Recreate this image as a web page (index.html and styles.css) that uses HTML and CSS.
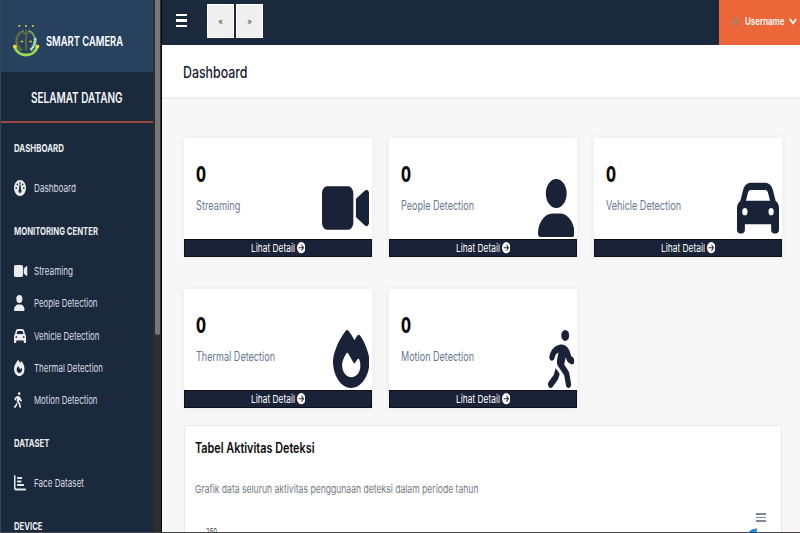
FILE: index.html
```html
<!DOCTYPE html>
<html lang="id">
<head>
<meta charset="utf-8">
<title>Smart Camera</title>
<link rel="stylesheet" href="styles.css">
</head>
<body>
<svg class="sprite" aria-hidden="true">
  <symbol id="video" viewBox="0 0 576 512" preserveAspectRatio="none"><path d="M0 128C0 92.7 28.7 64 64 64H320c35.3 0 64 28.7 64 64V384c0 35.3-28.7 64-64 64H64c-35.3 0-64-28.7-64-64V128zM559.1 99.8c10.4 5.6 16.9 16.4 16.9 28.2V384c0 11.8-6.5 22.6-16.9 28.2s-23 5-32.9-1.6l-96-64L416 337.1V320 192 174.9l14.2-9.5 96-64c9.8-6.5 22.4-7.2 32.9-1.6z"/></symbol>
  <symbol id="user" viewBox="0 0 448 512" preserveAspectRatio="none"><path d="M224 256A128 128 0 1 0 224 0a128 128 0 1 0 0 256zm-45.7 48C79.8 304 0 383.8 0 482.3C0 498.7 13.3 512 29.7 512H418.3c16.4 0 29.7-13.3 29.7-29.7C448 383.8 368.2 304 269.7 304H178.3z"/></symbol>
  <symbol id="car" viewBox="0 0 512 512" preserveAspectRatio="none"><path d="M135.2 117.4L109.1 192H402.9l-26.1-74.6C372.3 104.6 360.2 96 346.6 96H165.4c-13.6 0-25.7 8.6-30.2 21.4zM39.6 196.8L74.8 96.3C88.3 57.8 124.6 32 165.4 32H346.6c40.8 0 77.1 25.8 90.6 64.3l35.2 100.5c23.2 9.6 39.6 32.5 39.6 59.2V400v48c0 17.7-14.3 32-32 32H448c-17.7 0-32-14.3-32-32V400H96v48c0 17.7-14.3 32-32 32H32c-17.7 0-32-14.3-32-32V400 256c0-26.7 16.4-49.6 39.6-59.2zM128 288a32 32 0 1 0 -64 0 32 32 0 1 0 64 0zm288 32a32 32 0 1 0 0-64 32 32 0 1 0 0 64z"/></symbol>
  <symbol id="fire" viewBox="0 0 448 512" preserveAspectRatio="none"><path d="M159.3 5.4c7.8-7.3 19.9-7.2 27.7 .1c27.6 25.9 53.5 53.8 77.7 84c11-14.4 23.5-30.1 37-42.9c7.9-7.4 20.1-7.4 28 .1c34.6 33 63.9 76.6 84.5 118c20.3 40.8 33.8 82.5 33.8 111.9C448 404.2 348.2 512 224 512C98.4 512 0 404.1 0 276.5c0-38.4 17.8-85.3 45.4-131.7C73.3 97.7 112.7 48.6 159.3 5.4zM225.7 416c25.3 0 47.7-7 68.8-21c42.1-29.4 53.4-88.2 28.1-134.4c-4.5-9-16-9.6-22.5-2l-25.2 29.3c-6.6 7.6-18.5 7.4-24.7-.5c-16.5-21-46-58.5-62.8-79.8c-6.3-8-18.3-8.1-24.7-.1c-33.8 42.5-50.8 69.3-50.8 99.4C112 375.4 162.6 416 225.7 416z"/></symbol>
  <symbol id="walk" viewBox="0 0 320 512" preserveAspectRatio="none"><path d="M160 48a48 48 0 1 1 96 0 48 48 0 1 1 -96 0zM126.5 199.3c-1 .4-1.9 .8-2.9 1.2l-8 3.5c-16.4 7.3-29 21.2-34.7 38.2l-2.6 7.8c-5.6 16.8-23.7 25.8-40.5 20.2s-25.8-23.7-20.2-40.5l2.6-7.8c11.4-34.1 36.6-61.9 69.4-76.5l8-3.5c20.8-9.2 43.3-14 66.1-14c44.6 0 84.8 26.8 101.9 67.9L281 232.7l21.4 10.7c15.8 7.9 22.2 27.1 14.3 42.9s-27.1 22.2-42.9 14.3L247 287.3c-10.3-5.2-18.4-13.8-22.8-24.5l-9.6-23-19.3 65.5 49.5 54c5.4 5.9 9.2 13 11.2 20.8l23 92.1c4.3 17.1-6.1 34.5-23.3 38.8s-34.5-6.1-38.8-23.3l-22-88.1-70.7-77.1c-14.8-16.1-20.3-38.6-14.7-59.7l16.9-63.5zM68.7 398l25-62.4c2.1 3 4.5 5.8 7 8.6l40.7 44.4-14.5 36.2c-2.4 6-6 11.5-10.6 16.1L54.6 502.6c-12.5 12.5-32.8 12.5-45.3 0s-12.5-32.8 0-45.3L68.7 398z"/></symbol>
  <symbol id="go" viewBox="0 0 512 512" preserveAspectRatio="none"><path d="M0 256a256 256 0 1 0 512 0A256 256 0 1 0 0 256zM297 385c-9.4 9.4-24.6 9.4-33.9 0s-9.4-24.6 0-33.9l71-71L120 280c-13.3 0-24-10.7-24-24s10.7-24 24-24l214.1 0-71-71c-9.4-9.4-9.4-24.6 0-33.9s24.6-9.4 33.9 0L409 239c9.4 9.4 9.4 24.6 0 33.9L297 385z"/></symbol>
  <symbol id="gauge" viewBox="0 0 512 512" preserveAspectRatio="none"><path fill-rule="evenodd" d="M0 256a256 256 0 1 1 512 0A256 256 0 1 1 0 256zM288 96a32 32 0 1 0-64 0 32 32 0 1 0 64 0zM256 416c35.300 0 64-28.700 64-64 0-17.400-6.900-33.100-18.100-44.600L280 140h-48l-21.900 167.400C198.900 318.900 192 334.600 192 352c0 35.300 28.700 64 64 64zM176 144a32 32 0 1 0-64 0 32 32 0 1 0 64 0zM96 288a32 32 0 1 0 0-64 32 32 0 1 0 0 64zm352-32a32 32 0 1 0-64 0 32 32 0 1 0 64 0zM368 176a32 32 0 1 0 0-64 32 32 0 1 0 0 64z"/></symbol>
  <symbol id="chart" viewBox="0 0 512 512" preserveAspectRatio="none"><path d="M32 0c17.700 0 32 14.300 32 32V416c0 8.800 7.200 16 16 16H480c17.700 0 32 14.300 32 32s-14.300 32-32 32H80c-44.200 0-80-35.800-80-80V32C0 14.300 14.300 0 32 0zM160 64H320a32 32 0 0 1 0 64H160a32 32 0 0 1 0-64zM160 176H288a32 32 0 0 1 0 64H160a32 32 0 0 1 0-64zM160 288H400a32 32 0 0 1 0 64H160a32 32 0 0 1 0-64z"/></symbol>
</svg>

<div class="app">
  <aside class="sidebar">
    <div class="brand">
      <svg class="logo" viewBox="0 0 28 36">
        <g fill="#f2d92d"><circle cx="6.500" cy="2.500" r="1"/><circle cx="13.500" cy="2.500" r="1"/><circle cx="20.500" cy="2.500" r="1"/></g>
        <path d="M11 7.500C1.500 11 1.500 23 9.500 28" fill="none" stroke="#77803f" stroke-width="2.600" stroke-dasharray="1.600 .7"/>
        <path d="M16 7.500c5 1.500 7.500 7 7 12.500" fill="none" stroke="#86b96e" stroke-width="2" stroke-dasharray="1.600 .4"/>
        <path d="M23 15c0 6-2 10-5 12.500" fill="none" stroke="#b5e8bd" stroke-width="2.800" stroke-dasharray="2.400 .4"/>
        <path d="M13.500 6v22M10.500 10h6" stroke="#77773c" stroke-width="1.300"/>
        <path d="M8 18.500h2.500M17 18.500h2.500" stroke="#e6cf32" stroke-width="1.500"/>
        <path d="M1.500 23.500C5 35.500 22 35.500 25.500 23.500" fill="none" stroke="#9bdc4c" stroke-width="3"/>
        <path d="M.3 24l3.500-1M23.500 23l3.500 1" stroke="#f5df3b" stroke-width="3"/>
      </svg>
      <span class="brand-name fit" data-width="77">SMART CAMERA</span>
    </div>
    <div class="welcome"><span class="fit" data-width="91.500">SELAMAT DATANG</span></div>
    <nav class="nav">
      <h2 class="section"><span class="fit" data-width="50">DASHBOARD</span></h2>
      <a class="item"><span class="ico"><svg class="w512"><use href="#gauge"/></svg></span><span class="fit" data-width="42">Dashboard</span></a>
      <h2 class="section"><span class="fit" data-width="84">MONITORING CENTER</span></h2>
      <a class="item"><span class="ico"><svg class="w576"><use href="#video"/></svg></span><span class="fit" data-width="39">Streaming</span></a>
      <a class="item"><span class="ico"><svg class="w448"><use href="#user"/></svg></span><span class="fit" data-width="63.500">People Detection</span></a>
      <a class="item"><span class="ico"><svg class="w512"><use href="#car"/></svg></span><span class="fit" data-width="65.500">Vehicle Detection</span></a>
      <a class="item"><span class="ico"><svg class="w448"><use href="#fire"/></svg></span><span class="fit" data-width="69">Thermal Detection</span></a>
      <a class="item"><span class="ico"><svg class="w320"><use href="#walk"/></svg></span><span class="fit" data-width="63.500">Motion Detection</span></a>
      <h2 class="section"><span class="fit" data-width="35.500">DATASET</span></h2>
      <a class="item"><span class="ico"><svg class="w512"><use href="#chart"/></svg></span><span class="fit" data-width="50">Face Dataset</span></a>
      <h2 class="section"><span class="fit" data-width="28.500">DEVICE</span></h2>
    </nav>
  </aside>
  <div class="track"><div class="thumb"></div></div>

  <div class="main">
    <header class="topbar">
      <div class="burger"><i></i><i></i><i></i></div>
      <div class="pager"><button>«</button><button>»</button></div>
      <div class="account">
        <span class="hash">#</span>
        <span class="user-name fit" data-width="39.500">Username</span>
        <svg class="chevron" viewBox="0 0 8 7"><path d="M.8 1L4 5.300 7.200 1" fill="none" stroke="#fff" stroke-width="1.700"/></svg>
      </div>
    </header>
    <div class="page-head"><h1 class="fit" data-width="64.500">Dashboard</h1></div>
    <main class="content">
      <div class="cards">
        <section class="card">
          <div class="card-body"><div><div class="count"><span class="fit" data-width="10">0</span></div><div class="label"><span class="fit" data-width="44.500">Streaming</span></div></div><svg class="big w576"><use href="#video"/></svg></div>
          <a class="detail"><span class="fit" data-width="44">Lihat Detail</span><svg><use href="#go"/></svg></a>
        </section>
        <section class="card">
          <div class="card-body"><div><div class="count"><span class="fit" data-width="10">0</span></div><div class="label"><span class="fit" data-width="73">People Detection</span></div></div><svg class="big w448"><use href="#user"/></svg></div>
          <a class="detail"><span class="fit" data-width="44">Lihat Detail</span><svg><use href="#go"/></svg></a>
        </section>
        <section class="card">
          <div class="card-body"><div><div class="count"><span class="fit" data-width="10">0</span></div><div class="label"><span class="fit" data-width="75">Vehicle Detection</span></div></div><svg class="big w512"><use href="#car"/></svg></div>
          <a class="detail"><span class="fit" data-width="44">Lihat Detail</span><svg><use href="#go"/></svg></a>
        </section>
        <section class="card">
          <div class="card-body"><div><div class="count"><span class="fit" data-width="10">0</span></div><div class="label"><span class="fit" data-width="79">Thermal Detection</span></div></div><svg class="big w448"><use href="#fire"/></svg></div>
          <a class="detail"><span class="fit" data-width="44">Lihat Detail</span><svg><use href="#go"/></svg></a>
        </section>
        <section class="card">
          <div class="card-body"><div><div class="count"><span class="fit" data-width="10">0</span></div><div class="label"><span class="fit" data-width="73">Motion Detection</span></div></div><svg class="big w320"><use href="#walk"/></svg></div>
          <a class="detail"><span class="fit" data-width="44">Lihat Detail</span><svg><use href="#go"/></svg></a>
        </section>
      </div>
      <section class="panel">
        <h2><span class="fit" data-width="119.500">Tabel Aktivitas Deteksi</span></h2>
        <p><span class="fit" data-width="283.500">Grafik data seluruh aktivitas penggunaan deteksi dalam periode tahun</span></p>
        <div class="chart-menu"><i></i><i></i><i></i></div>
        <div class="chart"><span class="fit" data-width="11">250</span><svg class="curve" viewBox="0 0 10 10"><path d="M0 6Q3 2 8 2" fill="none" stroke="#2487ee" stroke-width="3"/></svg></div>
      </section>
    </main>
  </div>
</div>
<div class="window-edge"></div>
<script src="fit.js"></script>
</body>
</html>
```
FILE: styles.css
```css
* { box-sizing: border-box; }
body { margin: 0; width: 800px; height: 533px; overflow: hidden; font-family: Inter, "Open Sans", sans-serif; background: #f7f7f7; }
h1, h2, p { margin: 0; }
svg { display: block; flex: none; fill: currentColor; }
.sprite { position: absolute; width: 0; height: 0; }
.fit { display: inline-block; flex: none; white-space: nowrap; transform-origin: 0 50%; }
.app { display: flex; height: 533px; }

.sidebar { width: 153px; flex: none; height: 533px; overflow: hidden; background: #1b293c; border-left: 1px solid #33475a; color: #e9ecef; }
.brand { height: 72px; display: flex; align-items: center; padding: 9px 0 0 12px; background: #28415f; }
.logo { width: 27px; height: 36px; margin-right: 6px; }
.brand-name { font-size: 13.5px; font-weight: 600; line-height: 18px; color: #fff; }
.welcome { height: 51px; padding: 17px 0 0 29.5px; border-bottom: 2px solid #99483b; font-size: 14px; font-weight: 600; line-height: 18px; color: #f4f6f8; }
.nav { padding-top: 8.4px; }
.section { height: 34px; padding-left: 13px; display: flex; align-items: center; font-size: 11px; font-weight: 700; }
.item { height: 32.2px; display: flex; align-items: center; padding-left: 13px; font-size: 11px; color: #d8dce1; }
.item + .section { margin-top: 10.2px; }
.section + .item { margin-top: 6.7px; }
.ico { width: 20px; flex: none; color: #e9ebed; }
.ico svg { height: 16px; }
.ico .w576 { width: 13.5px; }
.ico .w512 { width: 12px; }
.ico .w448 { width: 10.7px; }
.ico .w320 { width: 8px; }

.track { width: 9px; flex: none; height: 533px; background: #2d2e2f; border-right: 1px solid #090b10; }
.thumb { width: 5px; height: 335px; margin-left: 2px; background: #777; border-radius: 0 0 3px 3px; }

.main { flex: 1; min-width: 0; }
.topbar { height: 45px; display: flex; align-items: center; background: #1b293c; padding-left: 14px; }
.burger { display: flex; flex-direction: column; gap: 3px; width: 11px; margin-top: -4px; }
.burger i { height: 2.4px; background: #fff; }
.pager { display: flex; gap: 2px; margin: -4px 0 0 20px; }
.pager button { width: 27px; height: 34px; padding: 0; border: 1px solid #fff; background: #efefef; color: #444; font: 8px Inter, sans-serif; }
.account { width: 81px; height: 45px; margin-left: auto; display: flex; align-items: center; background: #eb6639; padding: 0 3px 3px 12px; }
.hash { width: 14px; font-size: 12px; font-weight: 500; color: #a08474; }
.user-name { color: #fff; font-size: 10px; font-weight: 600; }
.chevron { width: 8px; height: 7px; margin-left: auto; }
.page-head { height: 54px; background: #fff; border-bottom: 2px solid #efefef; padding: 17px 0 0 21px; }
.page-head h1 { font-size: 15.5px; line-height: 20px; font-weight: 500; color: #141a32; }

.content { padding: 39px 18px 0 22px; }
.cards { display: grid; grid-template-columns: repeat(3, 188px); column-gap: 17px; row-gap: 32px; }
.card { height: 119px; background: #fff; box-shadow: 0 0 6px rgba(0,0,0,.06); }
.card-body { height: 101px; display: flex; justify-content: space-between; padding: 0 3px 0 11.5px; }
.count { margin-top: 24px; height: 26px; font-size: 21px; line-height: 26px; font-weight: 800; color: #080808; }
.label { margin-top: 9px; height: 17px; font-size: 12.5px; line-height: 17px; font-weight: 400; color: #667890; }
.big { height: 58px; margin-top: 41px; color: #1a2238; }
.big.w576 { width: 47px; }
.big.w512 { width: 42px; }
.big.w448 { width: 36.5px; }
.big.w320 { width: 26.500px; }
.detail { height: 18px; display: flex; align-items: center; justify-content: center; gap: 2px; background: #1a2238; border: 1px solid #0c0f1b; color: #fff; font-size: 11px; }
.detail svg { width: 8.500px; height: 11.500px; }

.panel { height: 130px; margin-top: 17px; background: #fff; border: 1px solid #e8e8e8; border-radius: 3px; padding: 13px 15px 0 10px; }
.panel h2 { height: 18px; font-size: 14px; line-height: 18px; font-weight: 600; color: #0b0b0b; }
.panel p { height: 16px; margin-top: 24px; font-size: 11px; line-height: 16px; color: #737a82; }
.chart-menu { display: flex; flex-direction: column; gap: 2px; width: 10px; margin: 16px 0 0 auto; }
.chart-menu i { height: 1.500px; background: #7e8998; }
.chart { display: flex; justify-content: space-between; align-items: flex-start; padding: 3.500px 7px 0 11px; font-size: 8.500px; line-height: 14px; color: #333; }
.curve { width: 10px; height: 10px; margin-top: 3px; }
.window-edge { position: absolute; left: 0; top: 532px; width: 800px; height: 1px; background: #454348; }
```
FILE: fit.js
```js
document.querySelectorAll('.fit').forEach(function (el) {
  var target = parseFloat(el.dataset.width);
  var natural = el.getBoundingClientRect().width;
  el.style.width = target + 'px';
  el.style.transform = 'scaleX(' + target / natural + ')';
});
```
